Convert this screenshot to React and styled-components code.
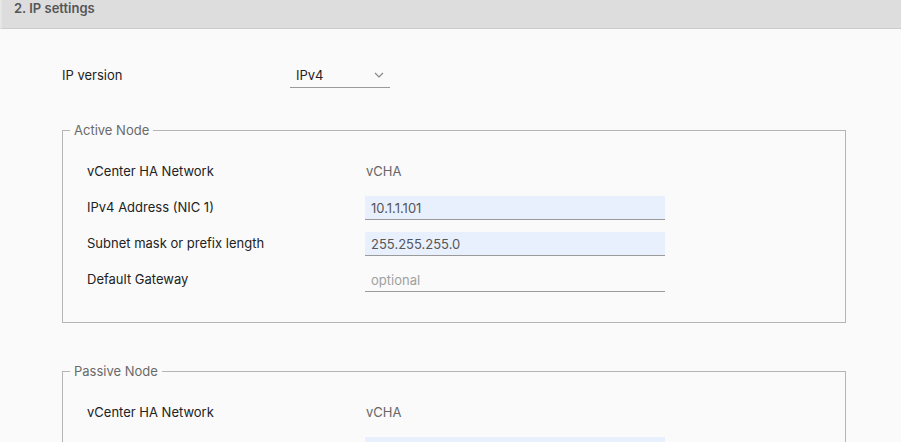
import React from 'react';
import styled, { createGlobalStyle } from 'styled-components';

const Global = createGlobalStyle`
  html, body {
    margin: 0;
    padding: 0;
    background: #fafafa;
    font-family: Inter, "Liberation Sans", sans-serif;
  }
`;

const Page = styled.div`
  width: 901px;
  height: 442px;
  overflow: hidden;
  background: #fafafa;
`;

const Header = styled.div`
  height: 29px;
  background: #dddddd;
  border-bottom: 1px solid #cccccc;
  border-left: 2px solid #e6e6e6;
  box-sizing: border-box;
  padding: 0 0 0 12px;
  font-size: 13px;
  font-weight: 600;
  color: #565656;
  line-height: 16px;
`;

const Body = styled.div`
  padding: 33px 55px 0 62px;
`;

const TopRow = styled.div`
  display: flex;
  align-items: center;
  height: 26px;
  margin-bottom: 34px;
`;

const TopLabel = styled.div`
  width: 228px;
  font-size: 13px;
  color: #222;
`;

const Select = styled.div`
  width: 100px;
  height: 25px;
  box-sizing: border-box;
  border-bottom: 1px solid #9a9a9a;
  display: flex;
  align-items: center;
  justify-content: space-between;
  padding: 0 6px 0 6px;
  font-size: 13px;
  color: #222;
`;

const Fieldset = styled.fieldset`
  margin: 0 0 40px 0;
  padding: 15px 0 25px 0;
  border: 1px solid #b5b5b5;
  border-radius: 0;
`;

const Legend = styled.legend`
  margin-left: 7px;
  padding: 0 4px;
  font-size: 13px;
  color: #6a6a6a;
`;

const Rows = styled.div`
  padding-left: 24px;
`;

const Row = styled.div`
  display: flex;
  align-items: center;
  height: 36px;
`;

const Label = styled.div`
  width: 278px;
  font-size: 13px;
  color: #222;
`;

const Value = styled.div`
  font-size: 13px;
  color: #666;
  padding-left: 1px;
`;

const Input = styled.div`
  width: 300px;
  height: 24px;
  box-sizing: border-box;
  background: ${p => (p.$filled ? '#e8f0fe' : 'transparent')};
  border-bottom: 1px solid #9a9a9a;
  padding: 0 6px;
  display: flex;
  align-items: center;
  font-size: 13px;
  color: ${p => (p.$filled ? '#565656' : '#a0a0a0')};
  margin-top: 2px;
`;

const Chevron = () => (
  <svg width="10" height="6" viewBox="0 0 10 6">
    <path d="M1 1 L5 5 L9 1" fill="none" stroke="#888" strokeWidth="1.2" />
  </svg>
);

const Node = ({ title, rows }) => (
  <Fieldset>
    <Legend>{title}</Legend>
    <Rows>
      <Row>
        <Label>vCenter HA Network</Label>
        <Value>vCHA</Value>
      </Row>
      {rows.map(r => (
        <Row key={r.label}>
          <Label>{r.label}</Label>
          <Input $filled={!!r.value}>{r.value || r.placeholder}</Input>
        </Row>
      ))}
    </Rows>
  </Fieldset>
);

const activeRows = [
  { label: 'IPv4 Address (NIC 1)', value: '10.1.1.101' },
  { label: 'Subnet mask or prefix length', value: '255.255.255.0' },
  { label: 'Default Gateway', placeholder: 'optional' },
];

const passiveRows = [
  { label: 'IPv4 Address (NIC 1)', value: '10.1.1.102' },
  { label: 'Subnet mask or prefix length', value: '255.255.255.0' },
];

export default function App() {
  return (
    <Page>
      <Global />
      <Header>2. IP settings</Header>
      <Body>
        <TopRow>
          <TopLabel>IP version</TopLabel>
          <Select>
            IPv4
            <Chevron />
          </Select>
        </TopRow>
        <Node title="Active Node" rows={activeRows} />
        <Node title="Passive Node" rows={passiveRows} />
      </Body>
    </Page>
  );
}
